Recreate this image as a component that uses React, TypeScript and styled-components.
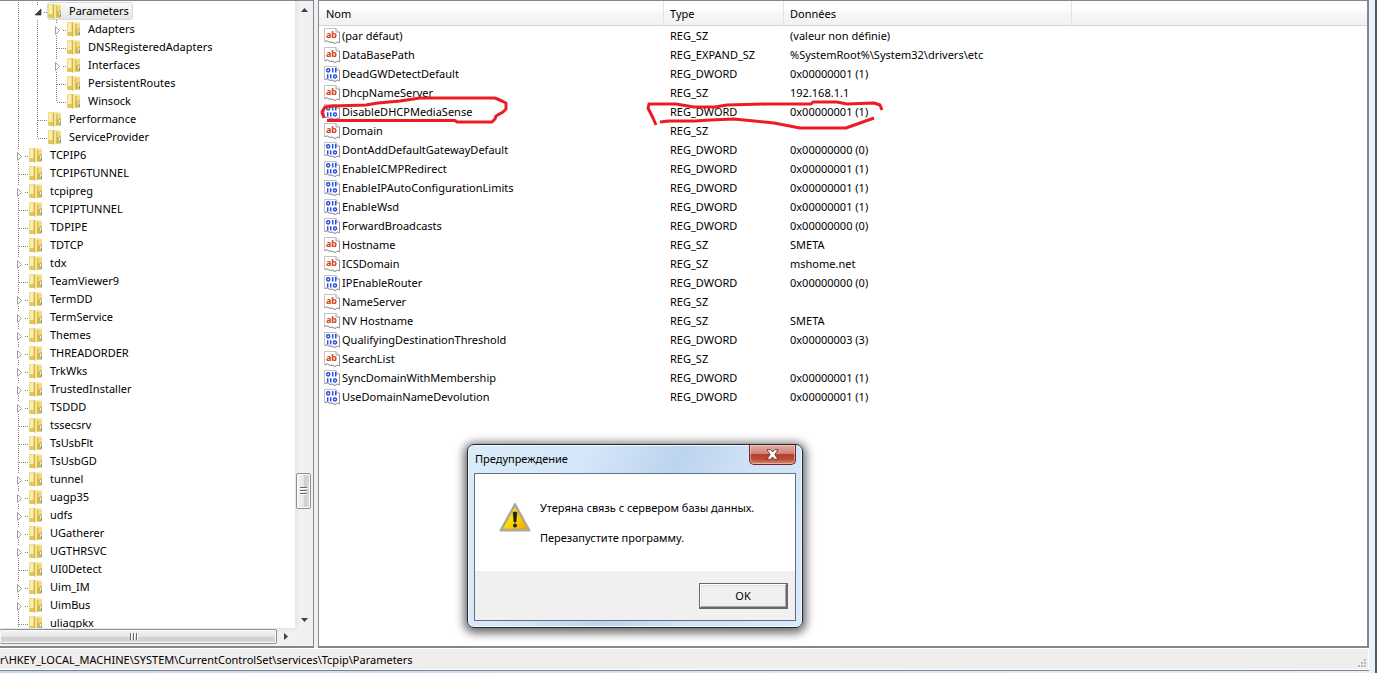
import React from "react";
import styled, { createGlobalStyle, css } from "styled-components";

const GlobalStyle = createGlobalStyle`
  *, *::before, *::after { box-sizing: border-box; }
  body {
    margin: 0;
    background: #fff;
    color: #000;
    font: 11px/18px "Noto Sans", "Open Sans", sans-serif;
  }
  button { font: inherit; color: inherit; }
`;

/* ---------- data ---------- */

type Guide = "none" | "line" | "tee" | "end" | "closed" | "open";
type Node = { label: string; guides: Guide[]; selected?: boolean };

const child = (label: string, guide: Guide): Node => ({ label, guides: ["line", guide] });
const grandchild = (label: string, guide: Guide): Node => ({
  label,
  guides: ["line", "line", guide],
});
const service = (label: string, closed = false): Node => ({
  label,
  guides: [closed ? "closed" : "tee"],
});

const nodes: Node[] = [
  { ...child("Parameters", "open"), selected: true },
  grandchild("Adapters", "closed"),
  grandchild("DNSRegisteredAdapters", "tee"),
  grandchild("Interfaces", "closed"),
  grandchild("PersistentRoutes", "tee"),
  grandchild("Winsock", "end"),
  child("Performance", "tee"),
  child("ServiceProvider", "end"),
  service("TCPIP6", true),
  service("TCPIP6TUNNEL"),
  service("tcpipreg", true),
  service("TCPIPTUNNEL"),
  service("TDPIPE"),
  service("TDTCP"),
  service("tdx", true),
  service("TeamViewer9"),
  service("TermDD", true),
  service("TermService", true),
  service("Themes", true),
  service("THREADORDER", true),
  service("TrkWks", true),
  service("TrustedInstaller", true),
  service("TSDDD", true),
  service("tssecsrv"),
  service("TsUsbFlt"),
  service("TsUsbGD"),
  service("tunnel", true),
  service("uagp35", true),
  service("udfs", true),
  service("UGatherer", true),
  service("UGTHRSVC", true),
  service("UI0Detect"),
  service("Uim_IM", true),
  service("UimBus", true),
  service("uliagpkx"),
];

const values: [string, string, string][] = [
  ["(par défaut)", "REG_SZ", "(valeur non définie)"],
  ["DataBasePath", "REG_EXPAND_SZ", "%SystemRoot%\\System32\\drivers\\etc"],
  ["DeadGWDetectDefault", "REG_DWORD", "0x00000001 (1)"],
  ["DhcpNameServer", "REG_SZ", "192.168.1.1"],
  ["DisableDHCPMediaSense", "REG_DWORD", "0x00000001 (1)"],
  ["Domain", "REG_SZ", ""],
  ["DontAddDefaultGatewayDefault", "REG_DWORD", "0x00000000 (0)"],
  ["EnableICMPRedirect", "REG_DWORD", "0x00000001 (1)"],
  ["EnableIPAutoConfigurationLimits", "REG_DWORD", "0x00000001 (1)"],
  ["EnableWsd", "REG_DWORD", "0x00000001 (1)"],
  ["ForwardBroadcasts", "REG_DWORD", "0x00000000 (0)"],
  ["Hostname", "REG_SZ", "SMETA"],
  ["ICSDomain", "REG_SZ", "mshome.net"],
  ["IPEnableRouter", "REG_DWORD", "0x00000000 (0)"],
  ["NameServer", "REG_SZ", ""],
  ["NV Hostname", "REG_SZ", "SMETA"],
  ["QualifyingDestinationThreshold", "REG_DWORD", "0x00000003 (3)"],
  ["SearchList", "REG_SZ", ""],
  ["SyncDomainWithMembership", "REG_DWORD", "0x00000001 (1)"],
  ["UseDomainNameDevolution", "REG_DWORD", "0x00000001 (1)"],
];

/* ---------- window ---------- */

const Frame = styled.div`
  position: relative;
  height: 100vh;
  padding: 0 6px 2px 0;
  overflow: hidden;
  background: linear-gradient(90deg, #c3d9f0, #e8f2fd);
  border-right: 2px solid #55585c;
`;

const Client = styled.div`
  display: flex;
  flex-direction: column;
  height: 100%;
  background: #f0eded;
  border-bottom: 1px solid #7c828c;
`;

const Panes = styled.div`
  flex: 1;
  min-height: 0;
  display: flex;
  gap: 4px;
  background: #eef0f2;
`;

const paneBorder = css`
  border: solid #828790;
  border-width: 1px 1px 2px 0;
`;

const TreePane = styled.nav`
  ${paneBorder}
  flex: none;
  width: 314px;
  display: grid;
  grid-template: minmax(0, 1fr) 18px / minmax(0, 1fr) 18px;
  background: #f0f0f0;
`;

const ValuePane = styled.main`
  ${paneBorder}
  flex: 1;
  min-width: 0;
  border-width: 1px 2px 2px 1px;
  background: #fff;
`;

const StatusBar = styled.footer`
  display: flex;
  justify-content: space-between;
  align-items: center;
  height: 22px;
  padding: 1px 1px 0 0;
  border: solid #fff;
  border-width: 1px 1px 1px 0;
`;

const Grip = styled.svg`
  align-self: flex-end;
  width: 10px;
  height: 10px;
`;

/* ---------- tree ---------- */

const Tree = styled.ul`
  margin: 0;
  padding: 1px 0 0 9px;
  overflow: hidden;
  list-style: none;
  background: #fff;
`;

const TreeRow = styled.li`
  display: flex;
  height: 18px;
`;

const GuideCell = styled.svg`
  flex: none;
  width: 19px;
  height: 18px;
`;

const TreeItem = styled.button<{ $selected?: boolean }>`
  display: flex;
  align-items: center;
  gap: 7px;
  height: 18px;
  padding: 0 3px 0 0;
  border: 1px solid ${(p) => (p.$selected ? "#d9d9d9" : "transparent")};
  border-radius: 3px;
  background: ${(p) => (p.$selected ? "linear-gradient(#fafafa, #e5e5e5)" : "none")};
  line-height: 16px;
`;

const FolderSvg = styled.svg`
  flex: none;
  width: 14px;
  height: 16px;
`;

const TreeGuide = ({ kind }: { kind: Guide }) => {
  const dots = { stroke: "#808080", strokeDasharray: "1 1" };
  const arrow = kind === "closed" || kind === "open";
  return (
    <GuideCell viewBox="0 0 19 18" aria-hidden="true">
      {(kind === "line" || kind === "tee") && <path d="M9.5 0v18" fill="none" {...dots} />}
      {kind === "end" && <path d="M9.5 0v10" fill="none" {...dots} />}
      {arrow && <path d={kind === "open" ? "M9.5 0v4" : "M9.5 0v4M9.5 16v2"} fill="none" {...dots} />}
      {(kind === "tee" || kind === "end") && <path d="M10 10.500H19" fill="none" {...dots} />}
      {arrow && <path d="M16 10.500h3" fill="none" {...dots} />}
      {kind === "closed" && <path d="M8.500 6.500v8l4-4z" fill="#fff" stroke="#a0a0a0" />}
      {kind === "open" && <path d="M13 7v6H7z" fill="#404040" stroke="#262626" strokeWidth=".6" />}
    </GuideCell>
  );
};

const Folder = () => (
  <FolderSvg viewBox="0 0 14 16" aria-hidden="true">
    <path d="M6 1.500h6.500l.5.500v12.500H6z" fill="#efdc84" />
    <path d="M8 9l5-2v7.500H8z" fill="#d9b94c" />
    <path d="M8 1.500h4.500v1H8z" fill="#faf0b8" />
    <path d="M0 1.500 1 1h5v14H.700L0 14.500z" fill="#efdb80" />
    <path d="M.500 11h5v4H1l-.500-.500z" fill="#e2c55c" />
    <path d="M1 2h3v9H1z" fill="#f8eeb0" />
    <path d="M5 2 6 1v14.500H5z" fill="#d4b24a" />
    <path d="M6 1 8.500 2.500v12L6 16z" fill="#f4e597" />
    <path d="M8.500 2.500h.8v12h-.8z" fill="#c9a53c" />
    <path d="M11.300 9h1v3h-1z" fill="#fff" />
    <path d="M12 10.500h1v3h-1z" fill="#4aa3cf" />
  </FolderSvg>
);

/* ---------- scroll bars ---------- */

const VerticalTrack = styled.div`
  display: flex;
  flex-direction: column;
  background: linear-gradient(90deg, #e6e6e6, #f2f2f2 30%, #f0f0f0);
`;

const HorizontalTrack = styled.div`
  display: flex;
  background: linear-gradient(#e6e6e6, #f2f2f2 30%, #f0f0f0);
`;

const ScrollButton = styled.button`
  display: grid;
  place-items: center;
  flex: none;
  width: 18px;
  height: 17px;
  padding: 0;
  border: 0;
  background: none;
`;

const Spacer = styled.div<{ $grow: number }>`
  flex: ${(p) => p.$grow} 1 0;
`;

const Thumb = styled.div<{ $vertical?: boolean }>`
  display: grid;
  place-items: center;
  border: 1px solid #8e8f8f;
  border-radius: 2px;
  box-shadow: inset 0 0 0 1px #fafafa;
  ${(p) =>
    p.$vertical
      ? css`
          flex: none;
          width: 15px;
          height: 36px;
          margin: 0 1px;
          background: linear-gradient(90deg, #f4f4f4, #e6e6e6 50%, #cfcfd1 52%, #d8d8da);
        `
      : css`
          flex: 1;
          height: 15px;
          margin-top: 1px;
          padding-right: 8px;
          border-left: 0;
          background: linear-gradient(#f4f4f4, #e6e6e6 50%, #cfcfd1 52%, #d8d8da);
        `}
`;

/* ---------- value list ---------- */

const ValueTable = styled.table`
  width: 100%;
  border-collapse: separate;
  border-spacing: 0;
  table-layout: fixed;
`;

const Column = styled.col<{ $width?: number }>`
  ${(p) => p.$width && `width: ${p.$width}px;`}
`;

const HeaderCell = styled.th`
  height: 25px;
  padding: 2px 6px 0 6px;
  border-right: 1px solid #e0e3e6;
  border-bottom: 1px solid #d5d5d5;
  background: linear-gradient(#fff 0 40%, #f7f8fa 42%, #f1f2f4);
  font-weight: 400;
  line-height: 20px;
  text-align: left;

  &:first-child { padding-left: 7px; }
  &:last-child { border-right: 0; }
`;

const Cell = styled.td`
  height: 19px;
  padding: 0 0 0 6px;
  white-space: nowrap;
`;

const NameCell = styled.div`
  display: flex;
  align-items: center;
  gap: 2px;
  margin-left: -1px;
`;

const ValueSvg = styled.svg`
  flex: none;
  width: 16px;
  height: 16px;
  font: bold 9px "Noto Sans", sans-serif;
`;

const ValueIcon = ({ binary }: { binary: boolean }) => (
  <ValueSvg viewBox="0 0 16 16" aria-hidden="true">
    <path d="M.5 .5H12L15.500 4v11l-2-1-2.500 1.500L8 14l-2 .5L3.500 13l-3 .5z" fill="#fff" stroke="#c4c4c4" />
    <path d="M12 .5V4h3.500" fill="#f4f4f4" stroke="#a8a8a8" />
    <path d="M15.500 4v11l-2-1-2.500 1.500L8 14l-2 .5L3.500 13l-3 .5" fill="none" stroke="#989898" />
    {binary ? (
      <g fill="none" stroke="#2a4fe0" strokeWidth="1.500">
        <rect x="2.700" y="2.700" width="3" height="3.200" rx="1.300" />
        <path d="M8.700 2v4.600M11.700 2v4.600M3.700 8.200v4.400M6.700 8.200v4.400" />
        <rect x="9.500" y="8.900" width="3" height="3" rx="1.300" />
      </g>
    ) : (
      <text x="7.500" y="10" textAnchor="middle" fill="#d3401c">ab</text>
    )}
  </ValueSvg>
);

/* ---------- message box ---------- */

const Dialog = styled.section`
  position: absolute;
  left: 467px;
  top: 444px;
  width: 336px;
  padding: 0 6px 6px;
  border: 1px solid #23282e;
  border-radius: 7px;
  background:
    linear-gradient(115deg, #dcebfa 0, #d4e6f9 30%, #bdd4ee 52%, #cfe2f7 70%, #d9eafb 100%);
  box-shadow: inset 0 0 0 1px #f2f9ff, 0 2px 10px 3px rgba(0, 0, 0, 0.6);
`;

const TitleBar = styled.header`
  display: flex;
  justify-content: space-between;
  height: 28px;
  padding-left: 1px;
`;

const Title = styled.h1`
  margin: 0;
  padding-top: 5px;
  font-size: 11px;
  font-weight: 400;
  line-height: 18px;
`;

const CloseButton = styled.button`
  display: grid;
  place-items: center;
  width: 47px;
  height: 20px;
  padding: 0;
  border: 1px solid #6a2a2a;
  border-top: 0;
  border-radius: 0 0 5px 5px;
  background: linear-gradient(#e5aca2, #d08378 45%, #b5402c 50%, #c04a35 75%, #d98a74);
  box-shadow: inset 0 0 0 1px rgba(255, 220, 210, 0.5);
`;

const DialogBody = styled.div`
  border: 1px solid #63707e;
  background: #fff;
`;

const Message = styled.div`
  display: flex;
  gap: 9px;
  height: 97px;
  padding: 25px 24px 0;
`;

const WarningSvg = styled.svg`
  flex: none;
  width: 32px;
  height: 32px;
  margin-top: 3px;
`;

const MessageText = styled.div`
  p {
    margin: 0 0 12px;
    white-space: nowrap;
  }
`;

const Actions = styled.div`
  display: flex;
  justify-content: flex-end;
  height: 49px;
  padding: 12px 7px;
  background: #f0f0f0;
`;

const OkButton = styled.button`
  width: 89px;
  height: 26px;
  padding: 0;
  border: solid #696969;
  border-width: 1px 2px 2px 1px;
  background: #f0f0f0;
  box-shadow: inset 1px 1px 0 #fff, inset -1px -1px 0 #a8a8a8, inset 2px 2px 0 #e3e3e3;
`;

/* ---------- marker strokes ---------- */

const Marker = styled.svg`
  position: absolute;
  left: 320px;
  top: 90px;
  width: 570px;
  height: 44px;
  pointer-events: none;
`;

export default function App() {
  return (
    <>
      <GlobalStyle />
      <Frame>
        <Client>
          <Panes>
            <TreePane aria-label="Registre">
              <Tree>
                {nodes.map((node) => (
                  <TreeRow key={node.label}>
                    {node.guides.map((kind, i) => (
                      <TreeGuide key={i} kind={kind} />
                    ))}
                    <TreeItem type="button" $selected={node.selected}>
                      <Folder />
                      {node.label}
                    </TreeItem>
                  </TreeRow>
                ))}
              </Tree>
              <VerticalTrack>
                <ScrollButton type="button" aria-label="Haut">
                  <svg width="7" height="4"><path d="M0 4 3.500 0 7 4z" fill="#404040" /></svg>
                </ScrollButton>
                <Spacer $grow={455} />
                <Thumb $vertical>
                  <svg width="7" height="8">
                    <path d="M0 .5h7M0 3.500h7M0 6.500h7" stroke="#6a6a6a" />
                    <path d="M0 1.500h7M0 4.500h7M0 7.500h7" stroke="#fff" />
                  </svg>
                </Thumb>
                <Spacer $grow={102} />
                <ScrollButton type="button" aria-label="Bas">
                  <svg width="7" height="4"><path d="M0 0h7L3.500 4z" fill="#404040" /></svg>
                </ScrollButton>
              </VerticalTrack>
              <HorizontalTrack>
                <Thumb>
                  <svg width="8" height="7">
                    <path d="M.5 0v7M3.500 0v7M6.500 0v7" stroke="#6a6a6a" />
                    <path d="M1.500 0v7M4.500 0v7M7.500 0v7" stroke="#fff" />
                  </svg>
                </Thumb>
                <ScrollButton type="button" aria-label="Droite">
                  <svg width="4" height="7"><path d="M0 0v7l4-3.500z" fill="#404040" /></svg>
                </ScrollButton>
              </HorizontalTrack>
            </TreePane>

            <ValuePane>
              <ValueTable>
                <colgroup>
                  <Column $width={345} />
                  <Column $width={120} />
                  <Column $width={288} />
                  <Column />
                </colgroup>
                <thead>
                  <tr>
                    <HeaderCell scope="col">Nom</HeaderCell>
                    <HeaderCell scope="col">Type</HeaderCell>
                    <HeaderCell scope="col">Données</HeaderCell>
                    <HeaderCell />
                  </tr>
                </thead>
                <tbody>
                  {values.map(([name, type, data]) => (
                    <tr key={name}>
                      <Cell>
                        <NameCell>
                          <ValueIcon binary={type === "REG_DWORD"} />
                          {name}
                        </NameCell>
                      </Cell>
                      <Cell>{type}</Cell>
                      <Cell>{data}</Cell>
                    </tr>
                  ))}
                </tbody>
              </ValueTable>
            </ValuePane>
          </Panes>
          <StatusBar>
            <span>r\HKEY_LOCAL_MACHINE\SYSTEM\CurrentControlSet\services\Tcpip\Parameters</span>
            <Grip viewBox="0 0 10 10" aria-hidden="true">
              <path d="M7 0h2v2H7zM7 3h2v2H7zM4 3h2v2H4zM7 6h2v2H7zM4 6h2v2H4zM1 6h2v2H1z" fill="#bcb9b9" />
            </Grip>
          </StatusBar>
        </Client>

        <Marker viewBox="0 0 570 44" fill="none" stroke="#ed1c24" strokeWidth="3" strokeLinejoin="round" aria-hidden="true">
          <path d="M4 28 2 22 5 17 13 16 46 15 58 13 80 11 100 8 175 8 182 11 186 13 186 19 183 22 176 26 175 29 172 32 137 32 135 30.500 7 30.500" />
          <path d="M336 35l-3-7-5-10 1-4 27 0 18 3 21 0 12-2 40-1 10 0 34 0 2-2 24 0 10 2 27-1 6 2 2 5" />
          <path d="M340 32l9-1 26 -0 15-1 24-1 40 4 26 5 46 0 28-10" />
        </Marker>

        <Dialog role="dialog" aria-labelledby="dialog-title">
          <TitleBar>
            <Title id="dialog-title">Предупреждение</Title>
            <CloseButton type="button" aria-label="Закрыть">
              <svg width="13" height="11" viewBox="0 0 13 11">
                <path d="M1 .700h3.500l2 2.300 2-2.300H12L8.800 5.500 12 10.300H8.500L6.500 8l-2 2.300H1l3.200-4.800z" fill="#fff" stroke="#5d3a3e" strokeWidth=".9" />
              </svg>
            </CloseButton>
          </TitleBar>
          <DialogBody>
            <Message>
              <WarningSvg viewBox="0 0 32 32" aria-hidden="true">
                <defs>
                  <linearGradient id="warn" x1="0" y1="0" x2="1" y2="1">
                    <stop offset="0" stopColor="#fff04a" />
                    <stop offset=".5" stopColor="#f9dc0a" />
                    <stop offset="1" stopColor="#f0a202" />
                  </linearGradient>
                </defs>
                <path d="M16 2 30.500 28.500h-29z" fill="#b9bcc0" stroke="#a5a8ac" strokeWidth="2" strokeLinejoin="round" />
                <path d="M16 5 28.500 27h-25z" fill="url(#warn)" stroke="#d79a10" strokeWidth=".6" />
                <path d="M14 10.500q2-1.500 4 0l-1 9.500h-2z" fill="#222" stroke="#222" strokeWidth=".6" />
                <circle cx="16" cy="23.500" r="2" fill="#222" />
              </WarningSvg>
              <MessageText>
                <p>Утеряна связь с сервером базы данных.</p>
                <p>Перезапустите программу.</p>
              </MessageText>
            </Message>
            <Actions>
              <OkButton type="button">OK</OkButton>
            </Actions>
          </DialogBody>
        </Dialog>
      </Frame>
    </>
  );
}
